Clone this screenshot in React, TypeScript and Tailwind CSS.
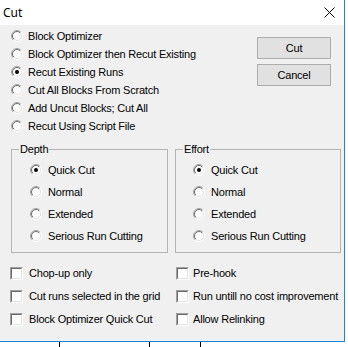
import React from 'react';

const FONT = { fontFamily: '"Liberation Sans", Arial, sans-serif' };

const Radio: React.FC<{ checked?: boolean }> = ({ checked }) => (
  <svg width="12" height="12" viewBox="0 0 12 12" className="shrink-0">
    <defs>
      <linearGradient id="rOuter" x1="0" y1="0" x2="1" y2="1">
        <stop offset="0.45" stopColor="#a0a0a0" />
        <stop offset="0.55" stopColor="#ffffff" />
      </linearGradient>
      <linearGradient id="rInner" x1="0" y1="0" x2="1" y2="1">
        <stop offset="0.45" stopColor="#696969" />
        <stop offset="0.55" stopColor="#e3e3e3" />
      </linearGradient>
    </defs>
    <circle cx="6" cy="6" r="5.5" fill="none" stroke="url(#rOuter)" strokeWidth="1" />
    <circle cx="6" cy="6" r="4.5" fill="#ffffff" stroke="url(#rInner)" strokeWidth="1" />
    {checked && <circle cx="6" cy="6" r="2" fill="#000000" />}
  </svg>
);

const Checkbox: React.FC = () => (
  <div className="w-[13px] h-[13px] shrink-0 border-t border-l border-[#a0a0a0] border-r-white border-b-white border-r border-b">
    <div className="w-full h-full bg-white border-t border-l border-[#696969] border-r border-b border-r-[#e3e3e3] border-b-[#e3e3e3]" />
  </div>
);

const MODES = [
  'Block Optimizer',
  'Block Optimizer then Recut Existing',
  'Recut Existing Runs',
  'Cut All Blocks From Scratch',
  'Add Uncut Blocks; Cut All',
  'Recut Using Script File',
];

const LEVELS = ['Quick Cut', 'Normal', 'Extended', 'Serious Run Cutting'];

const GroupBox: React.FC<{ title: string; className: string }> = ({ title, className }) => (
  <div className={`relative h-[104px] border border-[#b4b4b4] pt-[9px] ${className}`}>
    <span className="absolute -top-[8px] left-[7px] bg-[#f0f0f0] px-[1px] leading-[14px]">{title}</span>
    {LEVELS.map((label, i) => (
      <div key={label} className="h-[22px] flex items-center gap-[6px]">
        <Radio checked={i === 0} />
        <span>{label}</span>
      </div>
    ))}
  </div>
);

const Button: React.FC<{ label: string }> = ({ label }) => (
  <div className="w-[74px] h-[22px] bg-[#e1e1e1] border border-[#adadad] flex items-center justify-center">
    {label}
  </div>
);

export default function App() {
  return (
    <div className="w-[348px] h-[347px] bg-white overflow-hidden text-[11px] tracking-[-0.2px] text-black" style={FONT}>
      <div className="w-[345px] h-[342px] flex flex-col border-r border-b border-[#1883d7]">
        {/* Title bar */}
        <div className="h-[25px] shrink-0 bg-white flex items-center justify-between pl-[3px] pr-[9px]">
          <span className="text-[12px] tracking-normal" style={{ fontFamily: '"Noto Sans", "Open Sans", sans-serif' }}>Cut</span>
          <svg width="11" height="11" viewBox="0 0 11 11">
            <path d="M0.5 0.5 L10.5 10.5 M10.5 0.5 L0.5 10.5" stroke="#000" strokeWidth="1" />
          </svg>
        </div>

        {/* Body */}
        <div className="flex-1 bg-[#f0f0f0] flex flex-col">
          <div className="flex justify-between h-[110px] pl-[11px] pr-[13px]">
            <div className="pt-[2px]">
              {MODES.map((m, i) => (
                <div key={m} className="h-[18px] flex items-center gap-[5px]">
                  <Radio checked={i === 2} />
                  <span>{m}</span>
                </div>
              ))}
            </div>
            <div className="pt-[12px] flex flex-col gap-[5px]">
              <Button label="Cut" />
              <Button label="Cancel" />
            </div>
          </div>

          <div className="flex gap-[7px] pl-[11px] mt-[14px]">
            <GroupBox title="Depth" className="w-[157px] pl-[18px]" />
            <GroupBox title="Effort" className="w-[166px] pl-[17px]" />
          </div>

          <div className="flex mt-[9px]">
            <div className="w-[176px] pl-[10px]">
              {['Chop-up only', 'Cut runs selected in the grid', 'Block Optimizer Quick Cut'].map((c) => (
                <div key={c} className="h-[23px] flex items-center gap-[6px]">
                  <Checkbox />
                  <span>{c}</span>
                </div>
              ))}
            </div>
            <div>
              {['Pre-hook', 'Run untill no cost improvement', 'Allow Relinking'].map((c) => (
                <div key={c} className="h-[23px] flex items-center gap-[4px]">
                  <Checkbox />
                  <span>{c}</span>
                </div>
              ))}
            </div>
          </div>
        </div>
      </div>

      {/* grid behind the dialog */}
      <div className="flex h-[5px]">
        <div className="w-[59px]" />
        <div className="w-[90px] border-l border-black" />
        <div className="w-[51px] border-l border-black" />
        <div className="flex-1 border-l border-black" />
      </div>
    </div>
  );
}
